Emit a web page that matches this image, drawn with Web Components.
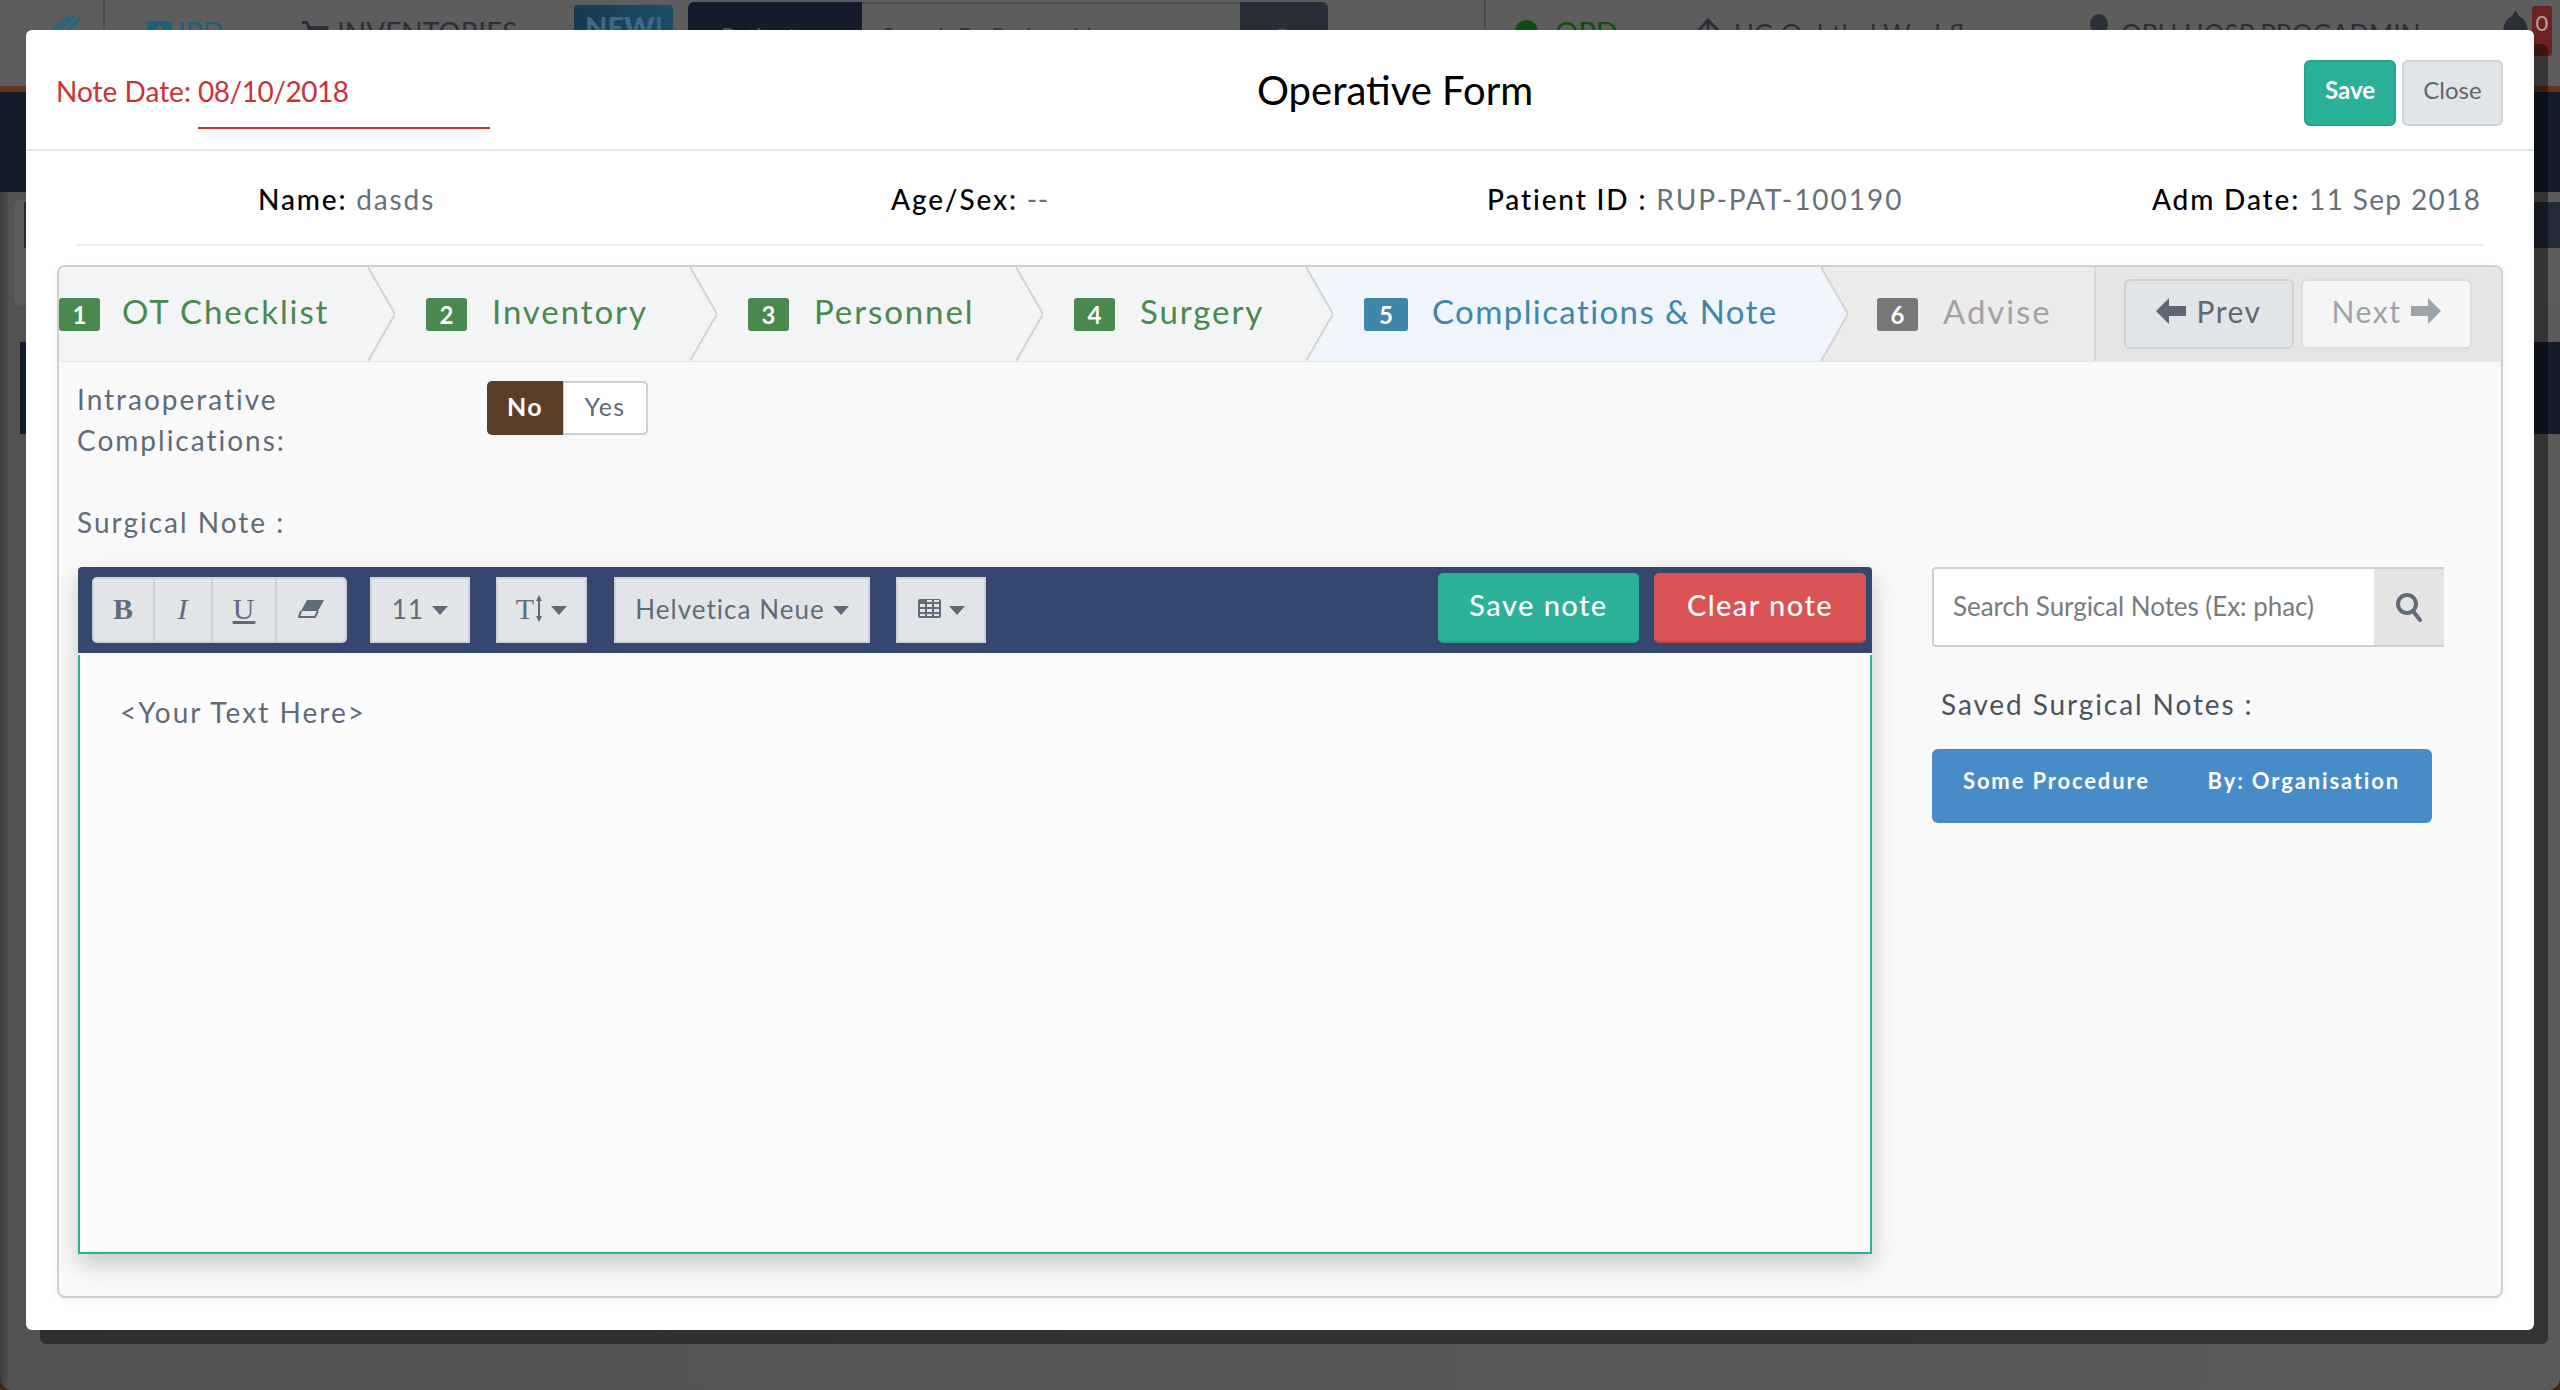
<!DOCTYPE html>
<html>
<head>
<meta charset="utf-8">
<title>Operative Form</title>
<style>
  html, body { margin: 0; height: 100%; background: #3b2a12; overflow: hidden; font-family: Lato, "Liberation Sans", sans-serif; }
</style>
</head>
<body>
<backdrop-page></backdrop-page>
<modal-dialog>
  <note-date slot="left" date="08/10/2018"></note-date>
  <span slot="title">Operative Form</span>
  <x-btn slot="actions" kind="teal">Save</x-btn>
  <x-btn slot="actions" kind="light">Close</x-btn>
  <patient-info></patient-info>
  <op-wizard>
    <complications-pane></complications-pane>
  </op-wizard>
</modal-dialog>

<script>
  // small helper, every element just sets its html in the shadow root
  class Base extends HTMLElement {
    constructor() {
      super();
      this.attachShadow({ mode: 'open' });
    }
  }

  // the page behind the modal, only the top of the nav shows
  class BackdropPage extends Base {
    connectedCallback() {
      this.shadowRoot.innerHTML = `
        <style>
          :host { position: absolute; inset: 0; display: block; overflow: hidden; color: #2a2f38; font-size: 28px; }
          .nav { height: 86px; display: flex; align-items: flex-start; background: #5d5d5d; border-bottom: 6px solid #63341a; }
          .nav > * { flex: none; box-sizing: border-box; white-space: nowrap; line-height: 40px; }
          .logo { width: 105px; height: 86px; border-right: 2px solid #4c4c4c; padding: 16px 0 0 38px; }
          .ipd { margin: 12px 0 0 42px; width: 155px; color: #1e5f7c; display: flex; gap: 6px; }
          .inv { margin-top: 12px; width: 272px; display: flex; gap: 8px; }
          .ipd svg, .inv svg { margin-top: 9px; }
          .new { margin-top: 5px; width: 99px; height: 60px; background: linear-gradient(90deg, #16394f, #1c4e66); border-radius: 4px; color: #3d6a82; font-weight: 900; padding: 2px 0 0 11px; font-size: 29px; }
          .seg { margin: 2px 0 0 15px; display: flex; height: 60px; font-size: 24px; line-height: 32px; }
          .seg b { width: 174px; background: #141c2b; border-radius: 6px 0 0 0; color: #555; font-weight: 400; padding: 18px 0 0 33px; box-sizing: border-box; }
          .seg i { width: 378px; border-top: 2px solid #4f4f4f; font-style: normal; color: #333; padding: 16px 0 0 19px; box-sizing: border-box; }
          .seg u { width: 88px; background: #2a2e3a; border-radius: 0 6px 0 0; text-decoration: none; padding: 24px 0 0 31px; box-sizing: border-box; }
          .sep { margin-left: 156px; border-left: 2px solid #4c4c4c; height: 60px; }
          .opd { margin: 12px 0 0 29px; width: 177px; color: #0f4d12; display: flex; gap: 17px; font-size: 29px; }
          .opd svg { margin-top: 8px; }
          .wf { margin-top: 14px; width: 398px; font-size: 27px; display: flex; gap: 9px; }
          .wf svg { margin-top: 3px; }
          .user { margin-top: 14px; width: 413px; font-size: 26px; display: flex; gap: 13px; }
          .bell { margin-top: 10px; width: 29px; }
          .badge { margin-top: 6px; width: 20px; height: 50px; background: #6b2320; border-radius: 3px; color: #b9a0a0; font-size: 22px; text-align: center; line-height: 34px !important; }
          .bar { height: 100px; background: #141c2b; }
          .body {
            height: 1198px; border-radius: 0 0 12px 12px; overflow: hidden;
            background: linear-gradient(90deg, #3c3c3c 0, #525252 9px, #5a5a5a 100%);
          }
          .panel { margin: 8px 0 0 14px; height: 105px; background: #5c5c5c; border-radius: 6px 0 0 6px; padding: 2px 0 0 10px; box-sizing: border-box; }
          .panel div { height: 46px; background: #232a38; }
          .tall { margin: 37px 0 0 20px; height: 92px; background: #141c2b; }
        </style>
        <div class="nav">
          <div class="logo">
            <svg width="42" height="40" viewBox="0 0 42 40" fill="none" stroke="#1e6a80" stroke-width="3">
              <path d="M2 40 Q8 14 32 1M9 40 Q14 16 37 1M16 40 Q21 20 42 2"/>
            </svg>
          </div>
          <span class="ipd"><svg width="25" height="25" viewBox="0 0 25 25"><rect width="25" height="25" rx="2" fill="#1e5f7c"/><path d="M12.5 5 V20 M5 12.5 H20" stroke="#5d5d5d" stroke-width="5"/></svg>IPD</span>
          <span class="inv"><svg width="27" height="24" viewBox="0 0 27 24" fill="#2a2f38"><path d="M0 0 H6 L8 5 H27 L24 17 H8 L4 3 H0 Z"/></svg>INVENTORIES</span>
          <div class="new">NEW!</div>
          <div class="seg"><b>Patient</b><i>Search By Patient Id</i><u><svg width="24" height="24" viewBox="0 0 24 24" fill="none" stroke="#555" stroke-width="3"><circle cx="11" cy="11" r="8"/></svg></u></div>
          <div class="sep"></div>
          <span class="opd"><svg width="23" height="23" viewBox="0 0 23 23"><circle cx="11.5" cy="11.5" r="11.5" fill="#0f4d12"/></svg>OPD =</span>
          <span class="wf"><svg width="33" height="36" viewBox="0 0 33 36" fill="none" stroke="#2a2f38" stroke-width="3"><path d="M1 20 L16 3 L32 20 M16 3 L16 12 M6 26 L16 14 L27 26"/></svg>UG Ophthal Workflow</span>
          <span class="user"><svg width="18" height="36" viewBox="0 0 18 36"><ellipse cx="9" cy="10" rx="9" ry="10" fill="#2a2f38"/></svg>OPH HOSP PROGADMIN</span>
          <div class="bell"><svg width="25" height="40" viewBox="0 0 25 40" fill="#2a2f38" style="display:block"><path d="M12.5 0 L16 6 Q25 10 25 24 V40 H0 V24 Q0 10 9 6 Z"/></svg></div>
          <div class="badge">0</div>
        </div>
        <div class="bar"></div>
        <div class="body">
          <div class="panel"><div></div></div>
          <div class="tall"></div>
        </div>
      `;
    }
  }

  class ModalDialog extends Base {
    connectedCallback() {
      this.shadowRoot.innerHTML = `
        <style>
          :host {
            position: absolute; left: 26px; top: 30px; width: 2508px; height: 1300px;
            display: block; box-sizing: border-box; background: #fff; border-radius: 6px;
            box-shadow: 14px 14px 0 rgba(0,0,0,.42);
          }
          header {
            height: 121px; box-sizing: border-box; border-bottom: 2px solid #e7e7e7;
            display: grid; grid-template-columns: 1201px auto 1fr; align-items: center;
            padding: 0 31px 0 30px;
          }
          .title { font-size: 40px; color: #000; }
          .actions { justify-self: end; display: flex; gap: 6px; margin-top: 6px; }
          main { padding: 0 31px; }
        </style>
        <header>
          <div><slot name="left"></slot></div>
          <div class="title"><slot name="title"></slot></div>
          <div class="actions"><slot name="actions"></slot></div>
        </header>
        <main><slot></slot></main>
      `;
    }
  }

  class NoteDate extends Base {
    connectedCallback() {
      this.shadowRoot.innerHTML = `
        <style>
          :host { display: flex; color: #cb3234; font-size: 28px; white-space: nowrap; position: relative; top: 12px; }
          .lab { line-height: 34px; }
          .val { width: 292px; margin-left: 7px; padding-bottom: 19px; border-bottom: 2px solid #cb3234; line-height: 34px; letter-spacing: -.45px; }
        </style>
        <span class="lab">Note Date:</span><span class="val">${this.getAttribute('date')}</span>
      `;
    }
  }

  class XBtn extends Base {
    connectedCallback() {
      const styles = {
        teal: 'background:#2bb198;border-color:#25a48c;color:#fff;font-weight:700;width:92px',
        light: 'background:#e2e5e8;border-color:#cfd2d5;color:#5d6874;width:101px'
      };
      this.shadowRoot.innerHTML = `
        <style>
          :host { display: block; }
          button {
            display: block; height: 66px; padding: 0 0 6px; box-sizing: border-box; font: inherit; font-size: 24px;
            border: 2px solid; border-radius: 6px; ${styles[this.getAttribute('kind')]}
          }
        </style>
        <button><slot></slot></button>
      `;
    }
  }

  class PatientInfo extends Base {
    connectedCallback() {
      // third value is the letter spacing of the value text
      const items = [
        ['Name:', 'dasds', 1.85],
        ['Age/Sex:', '--', 0.6],
        ['Patient ID :', 'RUP-PAT-100190', 1.95],
        ['Adm Date:', '11 Sep 2018', 1.35]
      ];
      this.shadowRoot.innerHTML = `
        <style>
          :host {
            display: grid; grid-template-columns: 633px 596px 665px auto; height: 95px; box-sizing: border-box;
            margin: 0 19px; padding: 3px 0 0 182px; align-items: center;
            border-bottom: 2px solid #eeeeee; font-size: 28px; letter-spacing: 1.85px; white-space: nowrap;
          }
          b { font-weight: 500; color: #000; }
          span { color: #66717e; }
        </style>
        ${items.map(i => `<div><b>${i[0]}</b> <span style="letter-spacing:${i[2]}px">${i[1]}</span></div>`).join('')}
      `;
    }
  }

  class OpWizard extends Base {
    connectedCallback() {
      const steps = [
        ['OT Checklist', 309, ''], ['Inventory', 322, ''], ['Personnel', 326, ''],
        ['Surgery', 290, ''], ['Complications &amp; Note', 515, 'active'], ['Advise', 273, 'off']
      ];
      const pads = [0, 58, 58, 58, 58, 56];
      const arrow = '<path d="M0 0 L27 47 L0 94" />';
      this.shadowRoot.innerHTML = `
        <style>
          :host {
            display: block; margin-top: 19px; height: 1033px; box-sizing: border-box;
            border: 2px solid #d0d0d0; border-radius: 8px; background: #f9f9f9;
            box-shadow: 0 3px 8px rgba(0,0,0,.05); overflow: hidden;
          }
          .bar { display: flex; height: 94px; background: #f3f4f6; border-bottom: 1px solid #e6e6e6; }
          .step {
            position: relative; height: 94px; display: flex; align-items: center; box-sizing: border-box; padding-bottom: 6px;
            font-size: 33px; letter-spacing: 1.9px; color: #48894e; white-space: nowrap; flex: none;
          }
          .step:first-child .num { margin-right: 22px; }
          .step.active { background: #f0f5fc; color: #3f86ab; letter-spacing: 1.4px; }
          .step.off { background: #ececec; color: #a3a3a3; }
          .num {
            width: 41px; height: 33px; margin: 6px 25px 0 0; border-radius: 3px; background: #48894e; color: #fff;
            font-size: 24px; font-weight: 700; text-align: center; line-height: 33px; letter-spacing: 0;
          }
          .active .num { background: #3f86ab; width: 44px; margin-right: 24px; }
          .off .num { background: #777; }
          .step svg { position: absolute; left: 100%; top: 0; z-index: 2; }
          .nav { flex: 1; background: #e5e5e5; border-left: 2px solid #d8d8d8; display: flex; gap: 7px; padding: 12px 0 0 28px; }
          .nav button {
            width: 170px; height: 70px; box-sizing: border-box; font: inherit; font-size: 30px; letter-spacing: 1.5px;
            background: #e2e5e8; border: 2px solid #cfd2d5; border-radius: 6px; color: #5d6874;
            display: flex; align-items: center; justify-content: center; gap: 10px; padding: 0 0 7px;
          }
          .nav button.next { background: #f5f5f5; border-color: #dedede; color: #9da3aa; width: 171px; }
        </style>
        <div class="bar">
          ${steps.map((s, i) => `
            <div class="step ${s[2]}" style="width:${s[1]}px;padding-left:${pads[i]}px">
              <span class="num">${i + 1}</span>${s[0]}
              ${i < 5 ? `<svg width="27" height="94" viewBox="0 0 27 94" fill="${s[2] == 'active' ? '#f0f5fc' : '#f3f4f6'}" stroke="#d4d4d4" stroke-width="2">${arrow}</svg>` : ''}
            </div>`).join('')}
          <div class="nav">
            <button><svg width="30" height="26" viewBox="0 0 30 26" fill="#5d6874"><path d="M0 13 L13 0 V8 H30 V18 H13 V26 Z"/></svg>Prev</button>
            <button class="next">Next<svg width="30" height="26" viewBox="0 0 30 26" fill="#9da3aa"><path d="M30 13 L17 0 V8 H0 V18 H17 V26 Z"/></svg></button>
          </div>
        </div>
        <slot></slot>
      `;
    }
  }

  class ComplicationsPane extends Base {
    connectedCallback() {
      this.shadowRoot.innerHTML = `
        <style>
          :host { display: grid; grid-template-columns: 1794px 512px; column-gap: 60px; padding: 0 0 0 19px; color: #5f6b78; font-size: 28px; letter-spacing: 2px; }
          .top { grid-column: 1 / 3; display: flex; height: 205px; box-sizing: border-box; padding-top: 17px; }
          .lab { width: 409px; line-height: 41px; margin-left: -1px; padding-right: 1px; }
          .ctrl { padding-top: 2px; }
        </style>
        <div class="top">
          <div class="lab">Intraoperative<br>Complications:<br><div style="height:41px"></div>Surgical Note :</div>
          <div class="ctrl"><yes-no></yes-no></div>
        </div>
        <note-editor></note-editor>
        <div class="right">
          <note-search></note-search>
          <saved-notes></saved-notes>
        </div>
      `;
    }
  }

  class YesNo extends Base {
    connectedCallback() {
      this.shadowRoot.innerHTML = `
        <style>
          :host { display: flex; height: 54px; font-size: 25px; letter-spacing: 1.3px; }
          div { display: flex; align-items: center; justify-content: center; box-sizing: border-box; padding-bottom: 4px; }
          .no { width: 76px; background: #5a3e27; color: #fff; border-radius: 5px 0 0 5px; font-weight: 700; }
          .yes { width: 85px; background: #fff; color: #5f6b78; border: 2px solid #cfcfcf; border-left-width: 1px; border-radius: 0 5px 5px 0; }
        </style>
        <div class="no">No</div><div class="yes">Yes</div>
      `;
    }
  }

  class NoteEditor extends Base {
    connectedCallback() {
      const caret = '<i class="caret"></i>';
      this.shadowRoot.innerHTML = `
        <style>
          :host { display: block; box-shadow: 0 10px 24px rgba(0,0,0,.2); border-radius: 4px 4px 0 0; }
          .tools {
            height: 86px; box-sizing: border-box; background: #35476e; border-radius: 4px 4px 0 0; display: flex;
            padding: 10px 6px 0 14px; align-items: flex-start; font-size: 26px; letter-spacing: 1.05px; color: #5f6b78;
          }
          .grp { display: flex; height: 66px; margin-right: 23px; }
          .b {
            background: #e2e5e8; border: 2px solid #cfd2d5; box-sizing: border-box; height: 66px; padding-bottom: 3px;
            display: flex; align-items: center; justify-content: center; gap: 8px; white-space: nowrap;
          }
          .grp .b + .b { border-left: 0; }
          .grp .b:first-child { border-radius: 5px 0 0 5px; }
          .grp .b:last-child { border-radius: 0 5px 5px 0; }
          .serif { font-family: "Liberation Serif", serif; font-size: 30px; }
          .caret { width: 0; height: 0; margin-top: 4px; border: 8px solid transparent; border-top: 9px solid #5f6b78; border-bottom: 0; }
          .act { height: 70px; margin: -4px 0 0 0; border: 0; font: inherit; color: #fff; font-size: 29px; letter-spacing: 1.45px; font-weight: 500; border-radius: 5px; box-sizing: border-box; padding: 0 0 5px; }
          .save { width: 201px; background: #2bb198; border-bottom: 2px solid #25a48c; margin-left: auto; }
          .clear { width: 212px; background: #da5253; border-bottom: 2px solid #c94445; margin-left: 15px; }
          .area {
            height: 599px; margin-top: 2px; box-sizing: border-box; background: #fcfcfc; border: 2px solid #2bb198; border-top: 0;
            padding: 40px 40px; font-size: 28px; letter-spacing: 2.05px; color: #5f6b78;
          }
        </style>
        <div class="tools">
          <div class="grp">
            <div class="b serif" style="width:63px;font-weight:700">B</div>
            <div class="b serif" style="width:58px;font-style:italic">I</div>
            <div class="b serif" style="width:64px;text-decoration:underline">U</div>
            <div class="b" style="width:70px">
              <svg width="26" height="18" viewBox="0 0 26 18"><path d="M9 0 H26 L20 11 H3 Z" fill="#5f6b78"/><path d="M3 11 L1 17 H17 L20 11" fill="none" stroke="#5f6b78" stroke-width="2"/></svg>
            </div>
          </div>
          <div class="grp" style="margin-right:26px"><div class="b" style="width:100px;border-radius:0">11${caret}</div></div>
          <div class="grp" style="margin-right:27px"><div class="b serif" style="width:91px;border-radius:0;gap:1px">T<svg width="6" height="27" viewBox="0 0 6 27" fill="#5f6b78"><path d="M3 0 L6 6 H4 V21 H6 L3 27 L0 21 H2 V6 H0 Z"/></svg><span style="width:7px"></span>${caret}</div></div>
          <div class="grp" style="margin-right:26px"><div class="b" style="width:256px;border-radius:0">Helvetica Neue${caret}</div></div>
          <div class="grp" style="margin-right:0"><div class="b" style="width:90px;border-radius:0">
            <svg width="23" height="19" viewBox="0 0 23 19"><rect width="23" height="19" rx="2" fill="#5f6b78"/><path fill="#e2e5e8" d="M2 5h5v3H2zM9 5h5v3H9zM16 5h5v3h-5zM2 10h5v3H2zM9 10h5v3H9zM16 10h5v3h-5zM2 15h5v2H2zM9 15h5v2H9zM16 15h5v2h-5zM9 1h5v2H9zM16 1h5v2h-5z"/></svg>${caret}</div></div>
          <button class="act save">Save note</button>
          <button class="act clear">Clear note</button>
        </div>
        <div class="area">&lt;Your Text Here&gt;</div>
      `;
    }
  }

  class NoteSearch extends Base {
    connectedCallback() {
      this.shadowRoot.innerHTML = `
        <style>
          :host { display: flex; width: 512px; height: 80px; box-sizing: border-box; background: #fff; border: 2px solid #cfcfcf; border-right: 0; border-radius: 4px 0 0 4px; }
          .txt { flex: 1; color: #7a7a7a; font-size: 26px; letter-spacing: -.05px; line-height: 74px; padding-left: 19px; white-space: nowrap; }
          .ic { width: 70px; background: #e4e4e4; display: flex; align-items: center; justify-content: center; }
        </style>
        <div class="txt">Search Surgical Notes (Ex: phac)</div>
        <div class="ic">
          <svg width="28" height="30" viewBox="0 0 28 30" fill="none" stroke="#5f6b78" stroke-width="4"><circle cx="12" cy="12" r="9"/><path d="M18 19 L25 28" stroke-linecap="round"/></svg>
        </div>
      `;
    }
  }

  class SavedNotes extends Base {
    connectedCallback() {
      this.shadowRoot.innerHTML = `
        <style>
          :host { display: block; }
          h4 { margin: 39px 0 0 9px; height: 63px; font-size: 28px; font-weight: 400; letter-spacing: 1.9px; color: #4a5461; line-height: 36px; }
          .card {
            width: 500px; height: 74px; box-sizing: border-box; background: #478bc9; border-radius: 6px; color: #fff;
            display: flex; justify-content: space-between; padding: 17px 32px 0 31px; font-size: 22px; font-weight: 700; letter-spacing: 1.85px; line-height: 30px;
          }
        </style>
        <h4>Saved Surgical Notes :</h4>
        <div class="card"><span>Some Procedure</span><span>By: Organisation</span></div>
      `;
    }
  }

  customElements.define('backdrop-page', BackdropPage);
  customElements.define('modal-dialog', ModalDialog);
  customElements.define('note-date', NoteDate);
  customElements.define('x-btn', XBtn);
  customElements.define('patient-info', PatientInfo);
  customElements.define('op-wizard', OpWizard);
  customElements.define('complications-pane', ComplicationsPane);
  customElements.define('yes-no', YesNo);
  customElements.define('note-editor', NoteEditor);
  customElements.define('note-search', NoteSearch);
  customElements.define('saved-notes', SavedNotes);
</script>
</body>
</html>
